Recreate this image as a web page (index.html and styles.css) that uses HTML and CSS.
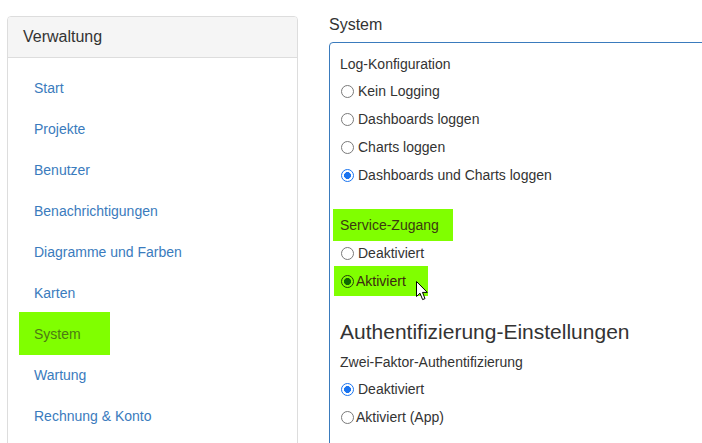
FILE: index.html
```html
<!DOCTYPE html>
<html lang="de">
<head>
<meta charset="utf-8">
<title>System</title>
<link rel="stylesheet" href="styles.css">
</head>
<body>
<div class="page">
  <aside class="panel">
    <div class="panel-heading">Verwaltung</div>
    <ul class="nav">
      <li><a href="#">Start</a></li>
      <li><a href="#">Projekte</a></li>
      <li><a href="#">Benutzer</a></li>
      <li><a href="#">Benachrichtigungen</a></li>
      <li><a href="#">Diagramme und Farben</a></li>
      <li><a href="#">Karten</a></li>
      <li><a href="#" class="nav-hl">System</a></li>
      <li><a href="#">Wartung</a></li>
      <li><a href="#">Rechnung &amp; Konto</a></li>
    </ul>
  </aside>
  <main class="content">
    <div class="title">System</div>
    <div class="box">
      <div class="label first">Log-Konfiguration</div>
      <div class="group">
        <label class="row"><span class="radio"></span>Kein Logging</label>
        <label class="row"><span class="radio"></span>Dashboards loggen</label>
        <label class="row"><span class="radio"></span>Charts loggen</label>
        <label class="row"><span class="radio checked"></span>Dashboards und Charts loggen</label>
      </div>
      <div class="label hl-label">Service-Zugang</div>
      <label class="row short"><span class="radio"></span>Deaktiviert</label>
      <div class="hl-row-wrap">
        <label class="row hl-row"><span class="radio checked-green"></span>Aktiviert</label>
        <svg class="cursor" width="13" height="20" viewBox="0 0 13 20" aria-hidden="true">
          <path d="M0.5 0.5 L0.5 15.5 L4 12.2 L6.6 18.6 L9 17.6 L6.5 11.4 L11.3 11.4 Z" fill="#fff" stroke="#000" stroke-width="1" stroke-linejoin="miter"/>
        </svg>
      </div>
      <h3 class="section">Authentifizierung-Einstellungen</h3>
      <div class="label sub">Zwei-Faktor-Authentifizierung</div>
      <div class="group tight">
        <label class="row"><span class="radio checked"></span>Deaktiviert</label>
        <label class="row nogap"><span class="radio"></span>Aktiviert (App)</label>
      </div>
    </div>
  </main>
</div>
</body>
</html>
```
FILE: styles.css
```css
html, body {
  margin: 0;
  padding: 0;
  overflow: hidden;
  background: #fff;
}
body {
  font-family: "Liberation Sans", Arial, sans-serif;
  font-size: 14px;
  color: #333;
  width: 702px;
  height: 443px;
}
.page {
  display: flex;
  align-items: flex-start;
  gap: 31px;
  padding: 16px 0 0 7px;
}
.panel {
  flex: 0 0 291px;
  box-sizing: border-box;
  border: 1px solid #ddd;
  border-radius: 4px;
}
.panel-heading {
  background: #f5f5f5;
  border-bottom: 1px solid #ddd;
  border-radius: 3px 3px 0 0;
  padding: 0 15px;
  height: 40px;
  line-height: 39px;
  font-size: 16px;
  color: #333;
}
.nav {
  list-style: none;
  margin: 0;
  padding: 10px 11px 10px 11px;
}
.nav a {
  display: block;
  padding: 10px 15px;
  line-height: 21px;
  color: #3a7bbd;
  text-decoration: none;
}
.nav a.nav-hl {
  width: 61px;
  margin-top: -2px;
  padding-top: 12px;
  background: #80ff00;
  color: #4d7a14;
}
.content {
  flex: 1;
  min-width: 0;
}
.title {
  font-size: 16px;
  line-height: 18px;
  color: #333;
}
.box {
  margin-top: 8px;
  margin-right: -30px;
  border: 1px solid #3a7bbd;
  border-radius: 4px;
  padding: 11px 10px 0 10px;
  min-height: 420px;
}
.label {
  line-height: 20px;
}
.group {
  margin-top: 3px;
}
.row {
  display: flex;
  align-items: center;
  height: 28px;
  cursor: default;
}
.row.short {
  height: 24px;
}
.radio {
  box-sizing: border-box;
  flex: 0 0 13px;
  width: 13px;
  height: 13px;
  margin: 0 4px 0 1px;
  border: 1px solid #7a7a7a;
  border-radius: 50%;
  background: #fff;
}
.radio.checked {
  border: 1.6px solid #1a74f0;
  background: radial-gradient(circle, #1a74f0 0 3.2px, #fff 3.7px);
}
.radio.checked-green {
  border: 1.4px solid #233d0c;
  background: radial-gradient(circle, #0d6a00 0 3.3px, transparent 3.8px);
}
.nogap .radio {
  margin-right: 2px;
}
.hl-label {
  margin: 20px 0 0 -7px;
  width: 120px;
  height: 32px;
  line-height: 32px;
  padding-left: 7px;
  box-sizing: border-box;
  background: #80ff00;
  color: #3b3a10;
}
.hl-row-wrap {
  position: relative;
  margin-top: 1px;
}
.hl-row {
  margin-left: -6px;
  padding-left: 6px;
  width: 94px;
  height: 30px;
  box-sizing: border-box;
  background: #80ff00;
  color: #3b2a10;
}
.hl-row .radio {
  margin-right: 2px;
}
.cursor {
  position: absolute;
  left: 76px;
  top: 15px;
}
.section {
  margin: 21px 0 0 0;
  font-size: 21px;
  font-weight: normal;
  line-height: 30px;
  color: #333;
}
.sub {
  margin-top: 5px;
}
.tight {
  margin-top: 3px;
}
```
